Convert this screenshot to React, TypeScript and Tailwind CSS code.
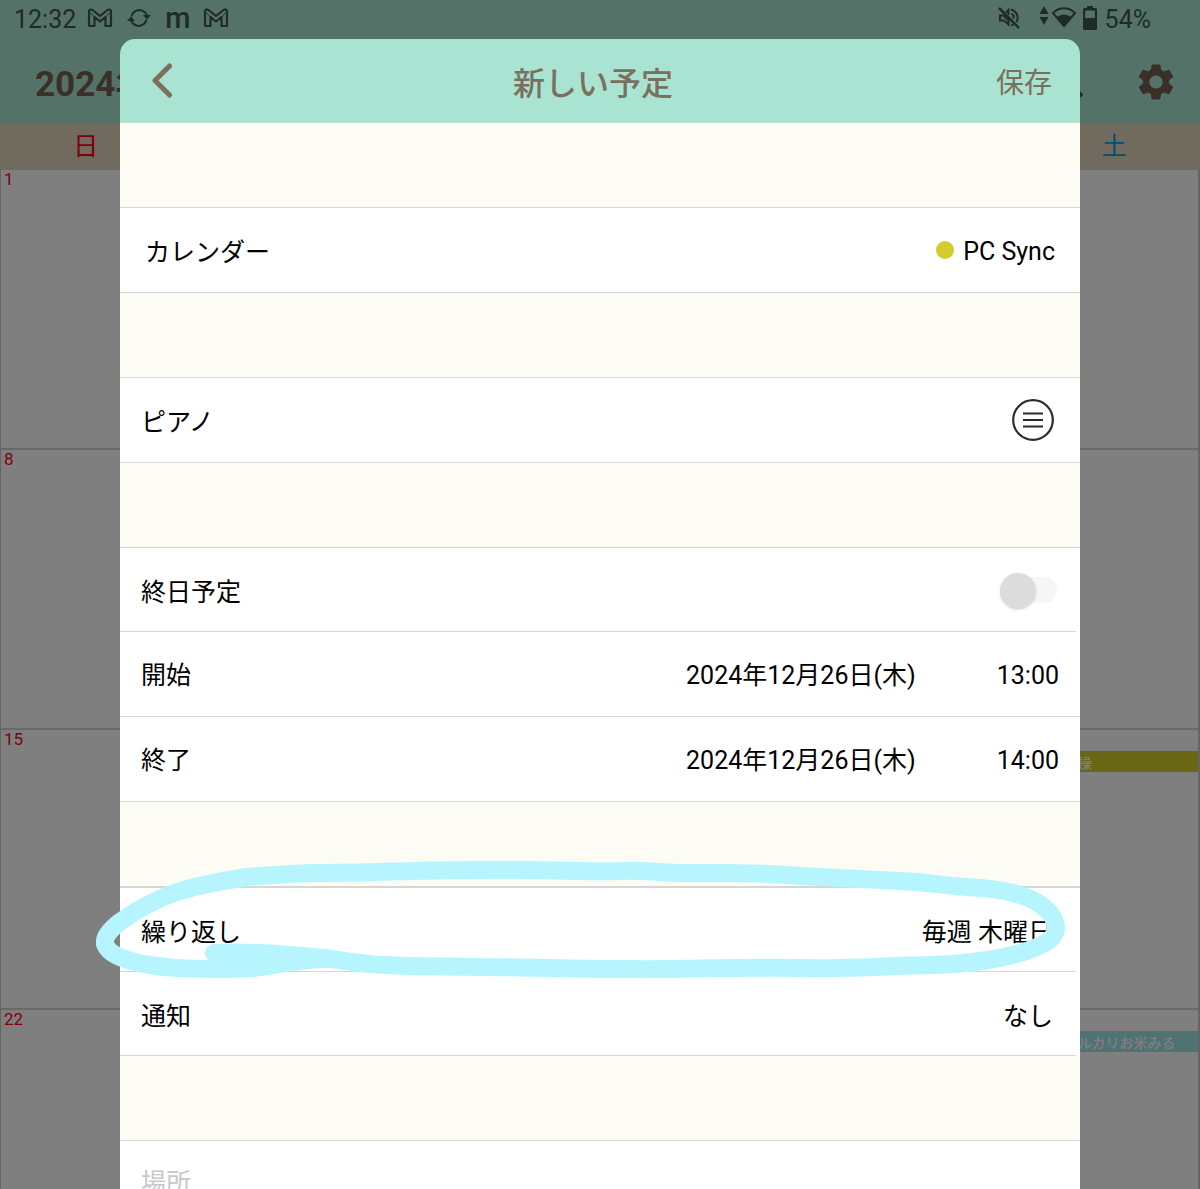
import { useState } from 'react';
import type { ReactNode } from 'react';
import { MdSearch, MdSettings } from 'react-icons/md';

const weekdays = ['日', '月', '火', '水', '木', '金', '土'];
const days = Array.from({ length: 28 }, (_, i) => i + 1);

const events: Record<number, { title: string; color: string }> = {
  21: { title: '体操', color: 'bg-[#d2cd2d]' },
  28: { title: 'メルカリお米みる', color: 'bg-[#9ee4e6]' },
};

function GmailIcon() {
  return (
    <svg width="26" height="20" viewBox="0 0 26 20" fill="none" stroke="currentColor" strokeWidth="2.200" strokeLinejoin="round">
      <path d="M2 3.500C2 1.500 4 1 5.500 2L13 8L20.500 2C22 1 24 1.500 24 3.500V18H18.500V9L13 13.500L7.500 9V18H3.500Q2 18 2 16.500Z" />
      <path d="M2 3.500L7.500 9M24 3.500L18.500 9" strokeWidth="1" />
    </svg>
  );
}

function SyncIcon() {
  return (
    <svg width="24" height="20" viewBox="0 0 24 20" fill="none" stroke="currentColor" strokeWidth="2">
      <path d="M4.500 8.500A8 8 0 0 1 18 4.500M19.500 11.500A8 8 0 0 1 6 15.500" />
      <path d="M16 7H24L20 11.500ZM0 13H8L4 8.500Z" fill="currentColor" stroke="none" />
      <path d="M18 4.500Q20 6 20 8M6 15.500Q4 14 4 12" />
    </svg>
  );
}

function MutedIcon() {
  return (
    <svg width="24" height="24" viewBox="0 0 24 24" fill="none" stroke="currentColor" strokeWidth="2">
      <path d="M2 2L22 22" strokeWidth="2.500" />
      <path d="M3 9.500H6.500L11.500 14.500V18.500L7 14.500H3ZM9 6.500L11.500 4V9" />
      <path d="M14 3.500A8.500 8.500 0 0 1 19.500 16M14 19.500A8 8 0 0 0 16.500 18.500" />
      <path d="M14.500 7.500A4.500 4.500 0 0 1 16.500 12.500" />
    </svg>
  );
}

function StatusBar() {
  return (
    <div className="flex h-[39px] items-center justify-between pl-[14px] pr-[49px] text-[25px] leading-none text-[#3c5750]">
      <div className="flex items-center">
        <span>12:32</span>
        <span className="ml-[11px] -mt-1"><GmailIcon /></span>
        <span className="ml-[14px] -mt-1"><SyncIcon /></span>
        <span className="ml-[14px] pb-1 text-[29px] leading-[34px] font-medium">m</span>
        <span className="ml-3 -mt-1"><GmailIcon /></span>
      </div>
      <div className="flex items-center">
        <span className="pb-1"><MutedIcon /></span>
        <svg className="ml-[18px] mb-2" width="10" height="20" viewBox="0 0 10 20" fill="currentColor">
          <path d="M5 0L9.500 8H0.500ZM5 19L0.500 11H9.500Z" />
        </svg>
        <svg className="ml-[2px] mb-1" width="26" height="23" viewBox="0 0 26 23" fill="none" stroke="currentColor" strokeWidth="2">
          <path d="M2 7C8 0.500 18 0.500 24 7L13 20Z" strokeLinejoin="round" />
          <path d="M6 11C10 7.500 16 7.500 20 11L13 20Z" fill="currentColor" stroke="none" />
        </svg>
        <svg className="ml-[6px] mb-1" width="14" height="24" viewBox="0 0 14 24" fill="currentColor">
          <path fillRule="evenodd" d="M4 0H10V2H12.500Q14 2 14 3.500V22.500Q14 24 12.500 24H1.500Q0 24 0 22.500V3.500Q0 2 1.500 2H4ZM2.200 4.500V12H11.800V4.500Z" />
        </svg>
        <span className="ml-2">54%</span>
      </div>
    </div>
  );
}

function Calendar() {
  return (
    <div className="bg-white">
      <div className="bg-[#abe5d3]">
        <StatusBar />
        <header className="flex h-[84px] items-center justify-between pl-[35px] pr-[22px] text-[#75614f]">
          <h1 className="pt-2 text-[35px] font-bold">2024年12月</h1>
          <div className="flex items-center gap-11 pt-[2px]">
            <button aria-label="検索" className="text-[#5a5148]"><MdSearch className="size-11" /></button>
            <button aria-label="設定"><MdSettings className="size-11" /></button>
          </div>
        </header>
      </div>
      <div className="grid h-[47px] grid-cols-7 items-center bg-[#e0d5be] pt-px text-center text-[25px]">
        {weekdays.map((day, i) => (
          <span key={day} className={i === 0 ? 'text-[#ff0010]' : i === 6 ? 'text-[#00a4dc]' : 'text-[#75614f]'}>
            {day}
          </span>
        ))}
      </div>
      <div className="grid grid-cols-7 border-l border-r-2 border-[#c8c8c8]">
        {days.map((day, i) => (
          <div key={day} className="h-[280px] border-b-2 border-[#d2d2d2]">
            <div className={`h-[21px] pl-[3px] text-[17px] leading-[18px] ${i % 7 === 0 ? 'text-[#ff0010]' : 'text-[#333333]'}`}>{day}</div>
            {events[day] && (
              <div className={`h-[21px] overflow-hidden whitespace-nowrap pl-[37px] text-[14px] leading-6 font-medium text-white ${events[day].color}`}>
                {events[day].title}
              </div>
            )}
          </div>
        ))}
      </div>
    </div>
  );
}

function Gap({ thick = false }: { thick?: boolean }) {
  return <div className={`border-[#d6d6d6] bg-[#fdfcf4] ${thick ? 'h-[86px] border-b-2' : 'h-[85px] border-b'}`} />;
}

function Row({ children, className = '' }: { children: ReactNode; className?: string }) {
  return <div className={`flex items-center justify-between border-b border-[#d6d6d6] ${className}`}>{children}</div>;
}

function DateRow({ label, date, time }: { label: string; date: string; time: string }) {
  return (
    <Row className="h-[85px] px-[21px] pt-1">
      <span className="flex-1">{label}</span>
      <button>{date}</button>
      <button className="ml-[81px]">{time}</button>
    </Row>
  );
}

// Hand-drawn marker loop around the repeat row
function MarkerLoop() {
  return (
    <svg
      className="pointer-events-none absolute -top-[30px] -left-6 h-[122px] w-[calc(100%+10px)]"
      viewBox="96 858 970 122"
      preserveAspectRatio="none"
      fill="none"
      stroke="#b7f5fe"
      strokeWidth="18"
      strokeLinecap="round"
      strokeLinejoin="round"
    >
      <path d="M214 953C250 951 290 955 325 958C345 961 360 964 385 965C420 967 450 966 480 967C530 967 570 969 623 969C680 970 720 967 800 968C850 969 880 966 933 965C970 964 1010 958 1032 949C1050 942 1056 936 1056 928C1055 912 1038 899 1013 893C998 889 984 888 967 887C940 885 925 882 900 881C865 879 835 878 800 876C760 872 720 873 687 873C660 873 645 870 623 871C570 872 530 869 480 870C420 870 370 873 313 873C290 874 268 875 247 877C222 881 200 885 180 891C158 898 135 911 120 922C108 931 104 938 105 944C107 950 113 955 125 959C150 968 185 969 213 969C230 969 240 969 253 968C275 966 290 960 325 959" />
      <path d="M218 958L300 960" />
    </svg>
  );
}

function EventDialog() {
  const [allDay, setAllDay] = useState(false);
  const [title, setTitle] = useState('ピアノ');

  return (
    <section role="dialog" aria-labelledby="dialog-title" className="mx-auto w-4/5 text-[25px] leading-9 text-black">
      <header className="grid h-[84px] grid-cols-3 items-center rounded-t-[15px] border-b border-[#bfe0d0] bg-[#a9e3d1] pl-[14px] pr-7 text-[#7a705d]">
        <button aria-label="戻る" className="ml-[18px] justify-self-start">
          <svg width="21" height="35" viewBox="0 0 21 35" fill="none" stroke="currentColor" strokeWidth="5" strokeLinecap="round" strokeLinejoin="round">
            <path d="M17.500 3L3 17.500L17.500 32" />
          </svg>
        </button>
        <h2 id="dialog-title" className="pt-[6px] text-center text-[32px] font-medium">新しい予定</h2>
        <button className="justify-self-end pt-[6px] text-[28px]">保存</button>
      </header>

      <Gap />
      <div className="bg-white">
        <Row className="h-[85px] px-[25px]">
          <span className="pt-[5px]">カレンダー</span>
          <button className="flex items-center gap-[9px]">
            <span className="size-[18px] rounded-full bg-[#d2cd2d]" />
            <span className="pt-1">PC Sync</span>
          </button>
        </Row>
      </div>

      <Gap />
      <div className="bg-white">
        <Row className="h-[85px] pl-[21px] pr-[26px]">
          <input
            aria-label="タイトル"
            value={title}
            onChange={(e) => setTitle(e.target.value)}
            className="min-w-0 flex-1 pt-[5px] outline-none"
          />
          <button aria-label="履歴">
            <svg width="42" height="42" viewBox="0 0 42 42" fill="none" stroke="#2b2b2b" strokeWidth="2.200">
              <circle cx="21" cy="21" r="19.800" />
              <path d="M11 14.500H31M11 21H31M11 27.500H31" />
            </svg>
          </button>
        </Row>
      </div>

      <Gap />
      <div className="bg-white">
        <Row className="mr-1 h-[84px] pl-[21px] pr-[19px]">
          <label htmlFor="all-day" className="pt-[6px]">終日予定</label>
          <input
            id="all-day"
            type="checkbox"
            role="switch"
            checked={allDay}
            onChange={(e) => setAllDay(e.target.checked)}
            className="relative h-[26px] w-[57px] appearance-none before:absolute before:inset-y-0 before:right-0 before:left-2 before:rounded-full before:bg-[#f6f6f6] after:absolute after:-top-1 after:left-0 after:size-9 after:rounded-full after:bg-[#dcdcdc] after:shadow-sm checked:after:left-5"
          />
        </Row>
        <DateRow label="開始" date="2024年12月26日(木)" time="13:00" />
        <DateRow label="終了" date="2024年12月26日(木)" time="14:00" />
      </div>

      <Gap thick />
      <div className="relative bg-white">
        <Row className="mr-1 h-[84px] pl-[21px] pr-[23px] pt-[6px]">
          <span>繰り返し</span>
          <button>毎週 木曜日</button>
        </Row>
        <Row className="mr-1 h-[84px] pl-[21px] pr-[23px] pt-[6px]">
          <span>通知</span>
          <button>なし</button>
        </Row>
        <MarkerLoop />
      </div>

      <Gap />
      <div className="bg-white">
        <Row className="h-[85px] px-[21px]">
          <input aria-label="場所" placeholder="場所" className="w-full outline-none placeholder:text-[#c7c7cc]" />
        </Row>
      </div>
    </section>
  );
}

export default function App() {
  return (
    <div lang="ja" className="relative h-screen overflow-hidden font-[Roboto,'Noto_Sans_CJK_JP',sans-serif]">
      <Calendar />
      <div className="absolute inset-0 overflow-hidden bg-black/50 pt-[39px]">
        <EventDialog />
      </div>
    </div>
  );
}
